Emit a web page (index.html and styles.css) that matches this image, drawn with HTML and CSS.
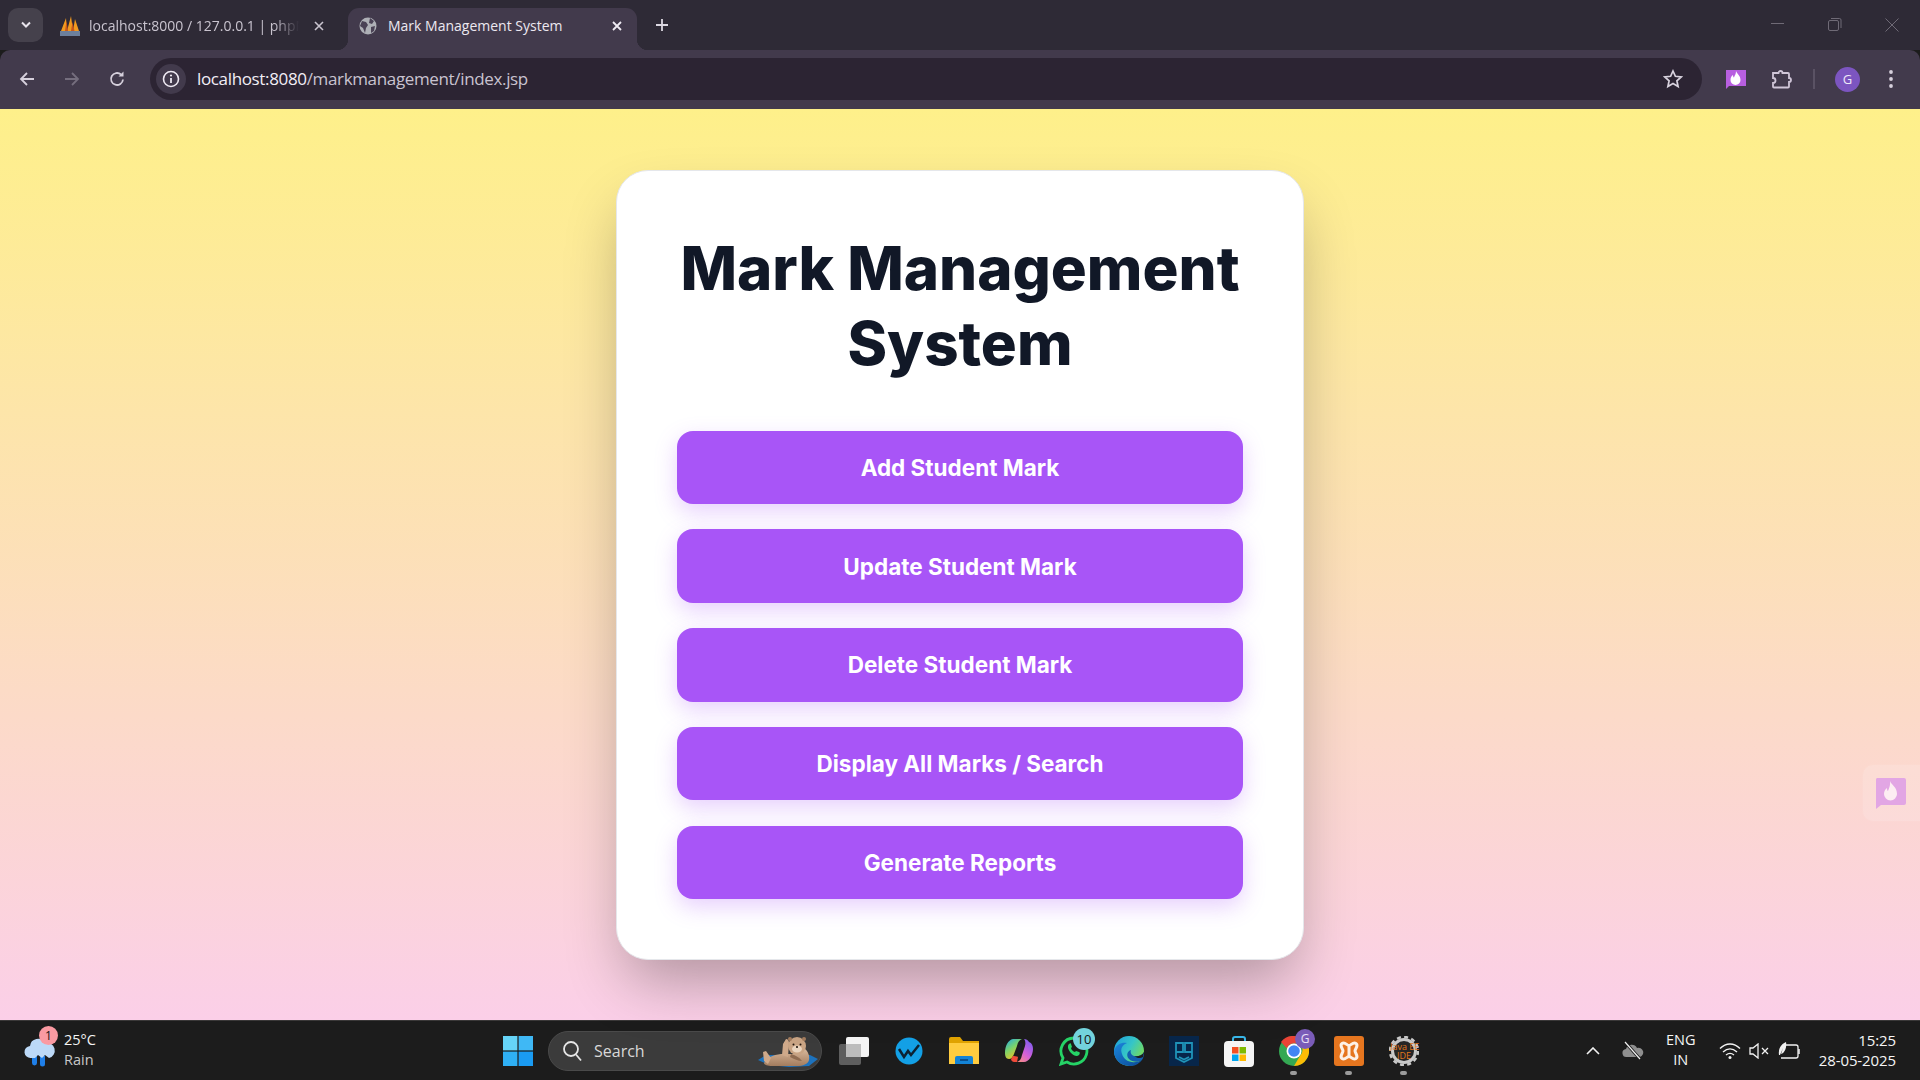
FILE: index.html
```html
<!DOCTYPE html>
<html lang="en">
<head>
<meta charset="utf-8">
<title>Mark Management System</title>
<link rel="stylesheet" href="styles.css">
</head>
<body>
<header class="chrome">
  <div class="tabstrip">
    <button class="tab-search"><svg width="12" height="8" viewBox="0 0 12 8"><path d="M2 1.500l4 4 4-4" fill="none" stroke="#e8e4ec" stroke-width="2"/></svg></button>
    <div class="tab">
      <svg class="favicon" width="22" height="22" viewBox="0 0 22 22"><path d="M2 16L7 3l1 13zM8 16L12 1l2 15zM14 16l2-12 4 12z" fill="#f29a1f"/><path d="M6 16L7.500 6 9 16zM12 16l1.500-9 2 9z" fill="#c8561a"/><rect x="1" y="16" width="20" height="5" fill="#6c7f9c"/></svg>
      <span class="tab-title tab-title-fade">localhost:8000 / 127.0.0.1 | phpMyAdmin</span>
      <svg class="tab-close" width="12" height="12" viewBox="0 0 12 12"><path d="M2 2l8 8M10 2l-8 8" stroke="#c9c4cf" stroke-width="1.600"/></svg>
    </div>
    <div class="tab tab-active">
      <svg class="favicon" width="18" height="18" viewBox="0 0 18 18"><circle cx="9" cy="9" r="8.500" fill="#aeb0b6"/><path d="M3 4l4 1 2 3-2 3-1 5-2-5-3-2zM11 1l4 3-2 3-3-1zM12 10l4-1-1 5-3 2z" fill="#4a4255"/></svg>
      <span class="tab-title tab-title-active">Mark Management System</span>
      <svg class="tab-close" width="12" height="12" viewBox="0 0 12 12"><path d="M2 2l8 8M10 2l-8 8" stroke="#f0ecf4" stroke-width="1.800"/></svg>
    </div>
    <svg class="new-tab" width="14" height="14" viewBox="0 0 14 14"><path d="M7 1v12M1 7h12" stroke="#dcd8e2" stroke-width="1.800"/></svg>
    <div class="window-controls">
      <svg width="14" height="14" viewBox="0 0 14 14"><path d="M0 5.500h13" stroke="#6f6a76" stroke-width="1"/></svg>
      <svg width="14" height="14" viewBox="0 0 14 14"><rect x=".5" y="2.500" width="10" height="10" rx="1.500" fill="none" stroke="#6f6a76"/><path d="M3 .5h8.500a1.500 1.500 0 0 1 1.500 1.500v8" fill="none" stroke="#6f6a76"/></svg>
      <svg width="14" height="14" viewBox="0 0 14 14"><path d="M.5.500l13 13M13.500.5l-13 13" stroke="#6f6a76"/></svg>
    </div>
  </div>
  <div class="toolbar">
    <div class="nav">
      <svg width="18" height="18" viewBox="0 0 18 18"><path d="M16 9H3M9 3L3 9l6 6" fill="none" stroke="#d6d0dc" stroke-width="1.800"/></svg>
      <svg width="18" height="18" viewBox="0 0 18 18"><path d="M2 9h13M9 3l6 6-6 6" fill="none" stroke="#756e7e" stroke-width="1.800"/></svg>
      <svg width="18" height="18" viewBox="0 0 18 18"><path d="M15 9.500A6 6 0 1 1 13 4.500" fill="none" stroke="#d6d0dc" stroke-width="1.800"/><path d="M15.500 1.500v5h-5z" fill="#d6d0dc"/></svg>
    </div>
    <div class="omnibox">
      <span class="site-info"><svg width="18" height="18" viewBox="0 0 18 18"><circle cx="9" cy="9" r="7.500" fill="none" stroke="#eee9f2" stroke-width="1.600"/><path d="M9 8v5" stroke="#eee9f2" stroke-width="1.800"/><circle cx="9" cy="5.500" r="1.100" fill="#eee9f2"/></svg></span>
      <span class="url">localhost:8080<span class="url-path">/markmanagement/index.jsp</span></span>
      <svg class="star" width="20" height="20" viewBox="0 0 20 20"><path d="M10 2l2.400 5.300 5.800.6-4.300 3.900 1.200 5.700L10 14.600l-5.100 2.900 1.200-5.700L1.800 7.900l5.800-.6z" fill="none" stroke="#d9d3df" stroke-width="1.700"/></svg>
    </div>
    <div class="toolbar-actions">
      <svg class="ext-flame" width="21" height="21" viewBox="0 0 21 21"><path d="M1 1h20v16H4l-3 3z" fill="#b85fe0"/><path d="M11 2c1 3 4.500 4.500 4.500 9a5 5 0 0 1-10 0c0-2.500 1-4 2.500-5 0 1.500.5 2.500 1 2.500.5-2 2.200-3.500 2-6.500z" fill="#fff"/></svg>
      <svg class="ext-puzzle" width="22" height="22" viewBox="0 0 22 22"><path d="M2 5h5.500a2 2 0 0 1 4 0H17a1 1 0 0 1 1 1v4a2 2 0 0 1 0 4v4.500a1 1 0 0 1-1 1H3a1 1 0 0 1-1-1V15a2.500 2.500 0 0 0 0-5z" fill="none" stroke="#d0c6d8" stroke-width="1.800"/></svg>
      <span class="toolbar-sep"></span>
      <span class="avatar">G</span>
      <svg class="dots" width="6" height="20" viewBox="0 0 6 20"><circle cx="3" cy="3" r="1.900" fill="#d6d0dc"/><circle cx="3" cy="10" r="1.900" fill="#d6d0dc"/><circle cx="3" cy="17" r="1.900" fill="#d6d0dc"/></svg>
    </div>
  </div>
</header>

<main class="page">
  <section class="card">
    <h1 class="title">Mark Management System</h1>
    <nav class="menu">
      <a class="menu-btn">Add Student Mark</a>
      <a class="menu-btn">Update Student Mark</a>
      <a class="menu-btn">Delete Student Mark</a>
      <a class="menu-btn">Display All Marks / Search</a>
      <a class="menu-btn">Generate Reports</a>
    </nav>
  </section>
  <aside class="side-widget">
    <svg width="31" height="31" viewBox="0 0 31 31"><path d="M2 0h27a2 2 0 0 1 2 2v23a2 2 0 0 1-2 2H6l-5 4V2a2 2 0 0 1 1-2z" fill="#e2a6e4"/><path d="M15 3c1.500 4 7 6 7 13a6.500 6.500 0 0 1-13 0c0-3 1.500-5 3-6 0 2 .5 3 1 3 1-3 2.500-5 2-10z" fill="#fdeef2"/></svg>
  </aside>
</main>

<footer class="taskbar">
  <div class="weather">
    <span class="weather-icon">
      <svg width="34" height="34" viewBox="0 0 34 34"><path d="M9 29v-7h5v7a2.500 2.500 0 0 1-5 0zM17 30v-8h5v8a2.500 2.500 0 0 1-5 0z" fill="#1f7fe8"/><path d="M8 24a6 6 0 0 1-1-12 8 8 0 0 1 15-3 7 7 0 0 1 4 15l-4-3-3 3-4-3-3 3z" fill="#bcd9f7"/></svg>
      <span class="badge badge-red">1</span>
    </span>
    <div class="weather-text"><span>25°C</span><span class="muted">Rain</span></div>
  </div>
  <div class="task-center">
    <svg class="start" width="30" height="30" viewBox="0 0 30 30"><rect width="14.400" height="14.400" fill="#66d4f7"/><rect x="15.600" width="14.400" height="14.400" fill="#3fb8f5"/><rect y="15.600" width="14.400" height="14.400" fill="#2fb0f5"/><rect x="15.600" y="15.600" width="14.400" height="14.400" fill="#1a9bf2"/></svg>
    <div class="search">
      <svg width="20" height="22" viewBox="0 0 20 22"><circle cx="9" cy="9" r="7" fill="none" stroke="#e6e6e6" stroke-width="1.800"/><path d="M14 14.500l5 6" stroke="#e6e6e6" stroke-width="1.800"/></svg>
      <span class="search-label">Search</span>
      <svg class="otter" width="60" height="34" viewBox="0 0 60 34">
        <defs><linearGradient id="fur" x1="0" y1="0" x2="0" y2="1"><stop offset="0" stop-color="#dcbc9f"/><stop offset="1" stop-color="#a37c5e"/></linearGradient></defs>
        <path d="M0 26l8-5h44l8 4-9 7-20 1-20-2z" fill="#1d72bd"/>
        <path d="M6 29c4-7 12-9 20-9h10l10-6c4 3 6 8 5 12-1 4-6 6-12 6H14c-4 0-8-1-8-3z" fill="url(#fur)"/>
        <path d="M5 18l3-1 5 7-3 6-4-3zM24 21l1-11 3-5c2 0 3 2 3 4l-1 14z" fill="#cfa98a"/>
        <path d="M33 20c4 1 8 3 11 7-4 0-8-2-12-4z" fill="#8f6b50"/>
        <circle cx="39" cy="12" r="9" fill="#c9a484"/>
        <circle cx="32" cy="5" r="2" fill="#a37c5e"/><circle cx="46" cy="5" r="2" fill="#a37c5e"/>
        <ellipse cx="39" cy="15" rx="5" ry="3.500" fill="#ead5bf"/>
        <circle cx="35.500" cy="10.500" r="1" fill="#22170f"/><circle cx="42.500" cy="10.500" r="1" fill="#22170f"/><circle cx="39" cy="13" r="1.100" fill="#22170f"/>
      </svg>
    </div>
    <div class="task-icons">
      <span class="task-icon"><svg width="30" height="28" viewBox="0 0 30 28"><rect x="7" y="0" width="23" height="20" rx="2" fill="#f4f4f4"/><rect x="0" y="7" width="22" height="21" rx="2" fill="#5e5e5e"/><rect x="7" y="7" width="15" height="13" fill="#bdbdbd"/></svg></span>
      <span class="task-icon"><svg width="28" height="28" viewBox="0 0 28 28"><circle cx="14" cy="14" r="13.500" fill="#13a0e6"/><path d="M4 12l5 8 4-6 3 4 8-10" fill="none" stroke="#0c2233" stroke-width="2.500"/></svg></span>
      <span class="task-icon"><svg width="30" height="27" viewBox="0 0 30 27"><path d="M0 2a2 2 0 0 1 2-2h9l3 4h16v6H0z" fill="#e0a200"/><path d="M0 6h30v21H0z" fill="#ffcc3f"/><path d="M6 27v-6a2 2 0 0 1 2-2h14a2 2 0 0 1 2 2v6z" fill="#1383d6"/><path d="M11 23h8" stroke="#073f77" stroke-width="1.500"/></svg></span>
      <span class="task-icon">
        <svg width="28" height="25" viewBox="0 0 28 25">
          <defs>
            <linearGradient id="copA" x1="0" y1="0" x2=".6" y2="1"><stop offset="0" stop-color="#1ea7ea"/><stop offset=".5" stop-color="#7bd36a"/><stop offset="1" stop-color="#f6c21f"/></linearGradient>
            <linearGradient id="copB" x1=".8" y1="0" x2=".2" y2="1"><stop offset="0" stop-color="#7a5cf0"/><stop offset=".6" stop-color="#d560d8"/><stop offset="1" stop-color="#f48a8a"/></linearGradient>
          </defs>
          <path d="M8 1h9c-3 1-4 3-5 7l-3 8c-1 3-3 5-5 5-3 0-4-3-4-6C0 8 3 2 8 1z" fill="url(#copA)"/>
          <path d="M19 1c2 0 4 1 5 3 3 1 4 4 4 7 0 6-4 13-9 13h-7c3-1 4-3 5-7l3-9c1-3 0-6-1-7z" fill="url(#copB)"/>
          <path d="M8 18c1 0 4 0 5 1l-1 5H9c-1 0-3-1-3-3z" fill="#ee4b3a"/>
          <path d="M15 5h3l-3 10h-3z" fill="#1b1b2a"/>
        </svg>
      </span>
      <span class="task-icon">
        <svg width="30" height="30" viewBox="0 0 30 30"><path d="M15 2a13 13 0 1 1-7 24l-6 2 2-6A13 13 0 0 1 15 2z" fill="none" stroke="#25d366" stroke-width="2.800"/><path d="M10 8c-2 2-1 6 2 9s6 4 8 2c1-1 1-3 0-3l-3-1-1 1c-2-.5-3.500-2-4-4l1-1-1-3c0-1-1-1-2 0z" fill="#25d366"/></svg>
        <span class="badge badge-teal">10</span>
      </span>
      <span class="task-icon">
        <svg width="30" height="30" viewBox="0 0 30 30">
          <defs>
            <linearGradient id="edgA" x1="0" y1="0" x2="1" y2=".6"><stop offset="0" stop-color="#1c9ddc"/><stop offset=".55" stop-color="#35c5c8"/><stop offset="1" stop-color="#78dc55"/></linearGradient>
            <linearGradient id="edgB" x1="0" y1="0" x2=".8" y2="1"><stop offset="0" stop-color="#1b86dc"/><stop offset="1" stop-color="#0c4f9e"/></linearGradient>
          </defs>
          <circle cx="15" cy="15" r="15" fill="url(#edgA)"/>
          <path d="M15 30A15 15 0 0 1 0 15C2 8 8 6 13 7 8 9 6 13 8 18c2 7 11 11 20 6a15 15 0 0 1-13 6z" fill="url(#edgB)"/>
          <path d="M30 16c-2 4-7 5-10 4-3-1-4-4-3-6-4 1-5 6-2 9 3 3 9 4 13 1 2-3 2-6 2-8z" fill="#125fb0"/>
          <path d="M30 16c-2 4-7 5-10 4 3 2 6 3 9 1z" fill="#1c1c1c"/>
        </svg>
      </span>
      <span class="task-icon"><svg width="30" height="30" viewBox="0 0 30 30"><rect width="30" height="30" fill="#07264a"/><path d="M7 7h7v9H7zM16 7h7v9h-7zM7 16v6l8 4 8-4v-6M10 21l5 2.500 5-2.500" fill="none" stroke="#1f93b8" stroke-width="1.800"/></svg></span>
      <span class="task-icon"><svg width="30" height="32" viewBox="0 0 30 32"><path d="M9 8V4a2 2 0 0 1 2-2h8a2 2 0 0 1 2 2v4" fill="none" stroke="#38b6e8" stroke-width="2"/><rect y="6" width="30" height="26" rx="4" fill="#f5f5f5"/><rect x="8" y="12" width="6.500" height="6.500" fill="#f25022"/><rect x="15.500" y="12" width="6.500" height="6.500" fill="#7fba00"/><rect x="8" y="19.500" width="6.500" height="6.500" fill="#00a4ef"/><rect x="15.500" y="19.500" width="6.500" height="6.500" fill="#ffb900"/></svg></span>
      <span class="task-icon task-open">
        <svg width="30" height="30" viewBox="0 0 30 30"><circle cx="15" cy="15" r="15" fill="#34a853"/><path d="M15 0a15 15 0 0 1 13 7.500H15a7.500 7.500 0 0 0-7 5L2 6A15 15 0 0 1 15 0z" fill="#ea4335"/><path d="M28 7.500A15 15 0 0 1 15 30l6.500-11A7.500 7.500 0 0 0 20 7.500z" fill="#fbbc05"/><circle cx="15" cy="15" r="7.500" fill="#fff"/><circle cx="15" cy="15" r="5.800" fill="#4285f4"/></svg>
        <span class="badge badge-purple">G</span>
      </span>
      <span class="task-icon task-open"><svg width="30" height="30" viewBox="0 0 30 30"><rect width="30" height="30" rx="3" fill="#e6761f"/><path d="M8 7.500C11 5.500 13 9.500 15 9.500S19 5.500 22 7.500C25 9.500 21 13 21 15S25 20.500 22 22.500C19 24.500 17 20.500 15 20.500S11 24.500 8 22.500C5 20.500 9 17 9 15S5 9.500 8 7.500zM15 10v10" fill="none" stroke="#fdf1e6" stroke-width="3"/></svg></span>
      <span class="task-icon task-open">
        <svg width="30" height="30" viewBox="0 0 30 30"><circle cx="15" cy="15" r="11.500" fill="#262626" stroke="#c9c9c9" stroke-width="3"/><circle cx="15" cy="15" r="14" fill="none" stroke="#c9c9c9" stroke-width="2.500" stroke-dasharray="4 3.300"/></svg>
        <span class="javaee">Java EE<br>IDE</span>
      </span>
    </div>
  </div>
  <div class="tray">
    <svg class="tray-chevron" width="14" height="8" viewBox="0 0 14 8"><path d="M1 7l6-6 6 6" fill="none" stroke="#f2f2f2" stroke-width="1.600"/></svg>
    <svg class="tray-cloud" width="22" height="20" viewBox="0 0 22 20"><path d="M5 16a4 4 0 0 1-1-8 6 6 0 0 1 11-1 4.500 4.500 0 0 1 3 9z" fill="#8f8f8f"/><path d="M3 1l15 17" stroke="#1b1b1b" stroke-width="3"/><path d="M3 1l15 17" stroke="#f2f2f2" stroke-width="1.200"/></svg>
    <div class="lang"><span>ENG</span><span>IN</span></div>
    <svg class="tray-wifi" width="22" height="18" viewBox="0 0 22 18"><path d="M1 6.500c6-6 14-6 20 0M4 10c4.500-4 9.500-4 14 0M7 13c2.500-2 5.500-2 8 0" fill="none" stroke="#f2f2f2" stroke-width="1.400"/><circle cx="11" cy="15.500" r="1.500" fill="#f2f2f2"/></svg>
    <svg class="tray-speaker" width="20" height="16" viewBox="0 0 20 16"><path d="M1 5h3l5-4v14l-5-4H1z" fill="none" stroke="#f2f2f2" stroke-width="1.300"/><path d="M13 5l6 6M19 5l-6 6" stroke="#f2f2f2" stroke-width="1.300"/></svg>
    <svg class="tray-battery" width="22" height="20" viewBox="0 0 22 20"><path d="M8 4h10a2 2 0 0 1 2 2v9a2 2 0 0 1-2 2H3" fill="none" stroke="#f2f2f2" stroke-width="1.300"/><path d="M21 8v5" stroke="#f2f2f2" stroke-width="1.500"/><path d="M1 14C0 8 3 3 8 1c1 5-1 11-5 12l2-6-3 7z" fill="#f2f2f2"/></svg>
    <div class="clock"><span>15:25</span><span>28-05-2025</span></div>
  </div>
</footer>
</body>
</html>
```
FILE: styles.css
```css
* { box-sizing: border-box; }
html, body { height: 100%; }
body {
  margin: 0;
  display: flex;
  flex-direction: column;
  height: 100vh;
  overflow: hidden;
  font-family: "Open Sans", "Noto Sans", sans-serif;
  background: #1c1c1c;
}

/* Browser chrome */
.chrome { flex: none; }
.tabstrip {
  height: 50px;
  background: #2e2a36;
  display: flex;
  align-items: flex-end;
  padding-left: 8px;
}
.tab-search {
  width: 35px;
  height: 34px;
  margin-bottom: 8px;
  border: 0;
  padding: 0;
  border-radius: 10px;
  background: #45414c;
  display: flex;
  align-items: center;
  justify-content: center;
}
.tab {
  height: 42px;
  display: flex;
  align-items: center;
  flex: none;
  padding-bottom: 7px;
}
.tab:nth-child(2) { width: 305px; padding-left: 16px; }
.tab-active {
  position: relative;
  width: 289px;
  padding-left: 11px;
  background: #423a4c;
  border-radius: 11px 11px 0 0;
}
.tab-active::before,
.tab-active::after {
  content: "";
  position: absolute;
  bottom: 0;
  width: 11px;
  height: 11px;
}
.tab-active::before { left: -11px; background: radial-gradient(circle at 0 0, transparent 11px, #423a4c 11.500px); }
.tab-active::after { right: -11px; background: radial-gradient(circle at 100% 0, transparent 11px, #423a4c 11.500px); }
.favicon { flex: none; }
.tab-title {
  font-family: "Open Sans", sans-serif;
  font-size: 14px;
  white-space: nowrap;
  overflow: hidden;
  color: #c9c4cf;
}
.tab-title-fade {
  width: 210px;
  margin-left: 8px;
  -webkit-mask-image: linear-gradient(90deg, #000 88%, transparent 100%);
  mask-image: linear-gradient(90deg, #000 88%, transparent 100%);
}
.tab-title-active {
  width: 218px;
  margin-left: 11px;
  color: #ece8f0;
}
.tab-close { flex: none; margin-left: 14px; }
.tab-active .tab-close { margin-left: 5px; }
.new-tab { margin: 0 0 18px 18px; flex: none; }
.window-controls {
  margin-left: auto;
  margin-bottom: 18px;
  margin-right: 21px;
  display: flex;
  gap: 43px;
}

.toolbar {
  height: 59px;
  background: #423a4c;
  border-radius: 10px 10px 0 0;
  display: flex;
  align-items: center;
  padding: 0 0 1px 18px;
}
.nav {
  display: flex;
  gap: 27px;
  width: 132px;
  flex: none;
}
.omnibox {
  width: 1552px;
  height: 42px;
  background: #2c2433;
  border-radius: 21px;
  display: flex;
  align-items: center;
  padding: 0 19px 0 6px;
  flex: none;
}
.site-info {
  width: 30px;
  height: 30px;
  border-radius: 50%;
  background: #423a4c;
  display: flex;
  align-items: center;
  justify-content: center;
  flex: none;
}
.url {
  margin-left: 11px;
  padding-bottom: 1px;
  font-size: 17px;
  letter-spacing: -.35px;
  color: #f2eef6;
  white-space: nowrap;
}
.url-path { color: #c9c3d0; }
.star { margin-left: auto; }
.toolbar-actions {
  display: flex;
  align-items: center;
  flex: 1;
  padding-left: 23px;
}
.ext-puzzle { margin-left: 25px; }
.toolbar-sep {
  width: 2px;
  height: 20px;
  background: #5a5264;
  margin-left: 20px;
}
.avatar {
  width: 25px;
  height: 25px;
  border-radius: 50%;
  background: #7c55c0;
  color: #efe8f8;
  font-size: 13px;
  display: flex;
  align-items: center;
  justify-content: center;
  margin-left: 20px;
}
.dots { margin-left: 28px; }

/* Page */
.page {
  position: relative;
  flex: 1;
  min-height: 0;
  background: linear-gradient(180deg, #fef08a 0%, #fbcfe8 100%);
  display: flex;
  justify-content: center;
  padding-top: 61px;
  font-family: Inter, sans-serif;
}
.card {
  width: 688px;
  height: 790px;
  padding: 60px 60px;
  background: #fff;
  border: 1px solid #e5e7eb;
  border-radius: 32px;
  box-shadow: 0 30px 60px -10px rgba(0, 0, 0, .3);
}
.title {
  margin: 0 0 49.500px;
  font-size: 60px;
  line-height: 75px;
  font-weight: 800;
  text-align: center;
  color: #111827;
}
.menu {
  display: flex;
  flex-direction: column;
  gap: 25.250px;
}
.menu-btn {
  height: 73.500px;
  display: flex;
  align-items: center;
  justify-content: center;
  background: #a855f7;
  border-radius: 16px;
  color: #fff;
  font-size: 22.500px;
  font-weight: 700;
  box-shadow: 0 8px 22px rgba(168, 85, 247, .28);
}
.side-widget {
  position: absolute;
  right: 0;
  top: 656px;
  width: 57px;
  height: 56px;
  padding: 13px 0 0 12px;
  border-radius: 10px 0 0 10px;
  background: rgba(255, 255, 255, .14);
  box-shadow: 0 0 3px rgba(255, 255, 255, .12);
}

/* Taskbar */
.taskbar {
  flex: none;
  height: 60px;
  background: #1c1c1c;
  border-top: 1px solid #3a3838;
  display: flex;
  align-items: center;
  color: #f5f5f5;
  font-size: 14px;
}
.weather {
  display: flex;
  align-items: center;
  width: 503px;
  padding-left: 23px;
  flex: none;
}
.weather-icon { position: relative; display: flex; width: 41px; }
.weather-text {
  display: flex;
  flex-direction: column;
  line-height: 20px;
  font-size: 14.500px;
  padding-bottom: 2px;
}
.muted { color: #c8c8c8; }
.badge {
  position: absolute;
  border-radius: 50%;
  display: flex;
  align-items: center;
  justify-content: center;
  font-size: 12px;
  color: #141414;
}
.badge-red { left: 16px; top: -8px; width: 19px; height: 19px; background: #fa9aa2; }
.badge-teal { left: 27px; top: -3px; width: 22px; height: 22px; background: #73d3dd; font-size: 13px; }
.badge-purple { left: 29px; top: -2px; width: 20px; height: 20px; background: #7a5cb8; color: #e8e0f6; }
.task-center { display: flex; align-items: center; flex: none; }
.start { flex: none; }
.search {
  width: 274px;
  height: 40px;
  margin-left: 15px;
  border-radius: 20px;
  background: #3b3b3b;
  border: 1px solid #4a4a4a;
  display: flex;
  align-items: center;
  padding-left: 13px;
  flex: none;
  overflow: hidden;
}
.search-label {
  margin-left: 12px;
  font-size: 16px;
  color: #d8d8d8;
}
.otter { margin-left: auto; margin-right: 3px; }
.task-icons { display: flex; margin-left: 4px; }
.task-icon {
  position: relative;
  width: 55px;
  height: 40px;
  display: flex;
  align-items: center;
  justify-content: center;
}
.task-open::after {
  content: "";
  position: absolute;
  left: 24px;
  bottom: -4px;
  width: 7px;
  height: 4px;
  border-radius: 2px;
  background: #9b9b9b;
}
.javaee {
  position: absolute;
  left: 14px;
  top: 11px;
  width: 28px;
  text-align: center;
  font-size: 9px;
  line-height: 9px;
  color: #e2781c;
  white-space: nowrap;
}
.tray {
  margin-left: auto;
  display: flex;
  align-items: center;
  padding-right: 24px;
  flex: none;
}
.tray-cloud { margin-left: 22px; }
.lang {
  margin-left: 19px;
  width: 36px;
  display: flex;
  flex-direction: column;
  align-items: center;
  line-height: 20px;
  font-size: 14.500px;
  padding-bottom: 2px;
}
.tray-wifi { margin-left: 20px; }
.tray-speaker { margin-left: 8px; }
.tray-battery { margin-left: 9px; }
.clock {
  margin-left: 19px;
  display: flex;
  flex-direction: column;
  align-items: flex-end;
  line-height: 20px;
  font-size: 15px;
  letter-spacing: -.1px;
  padding-bottom: 2px;
}
```
